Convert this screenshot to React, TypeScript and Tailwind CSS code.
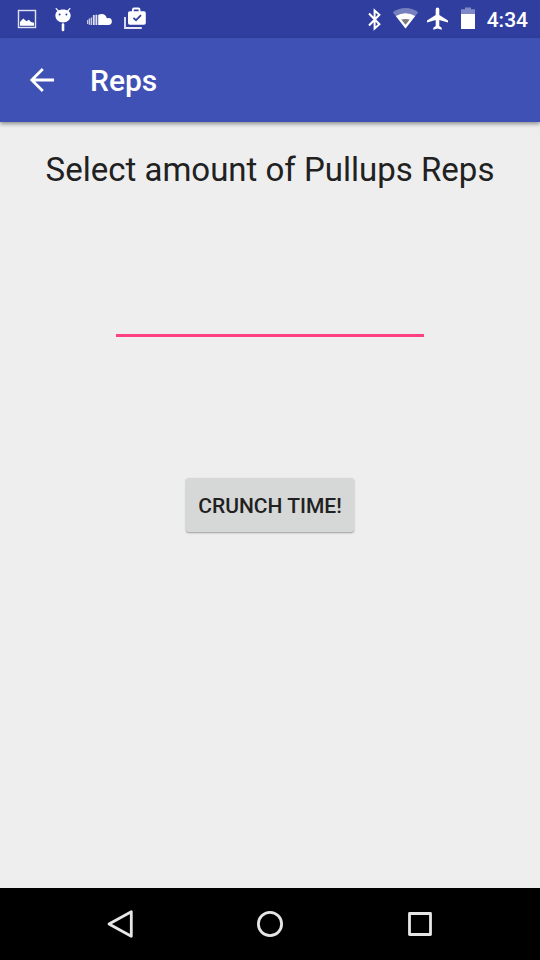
import React, { useState } from 'react';

function NotificationIcons() {
  return (
    <div className="flex pl-[9px] text-white" aria-hidden="true">
      <svg className="h-[38px] w-9" viewBox="0 0 36 38">
        <rect x="9.5" y="10.5" width="17" height="17" fill="none" stroke="#e0e2f0" strokeWidth="1.4" />
        <path d="M11 25.8V22l3.2-3.6 3.3 2.8 2.3-1.4 2.2 2.2 3 .8v3z" fill="#fff" />
      </svg>
      <svg className="h-[38px] w-9" viewBox="0 0 36 38">
        <path
          d="M10.4 15.6C10.4 11.6 13.6 9.6 18 9.6S25.6 11.6 25.6 15.6 22.4 22.6 18 22.6 10.4 19.6 10.4 15.6z"
          fill="currentColor"
        />
        <path d="M13.6 11.4 11.2 8.6M22.4 11.4l2.4-2.8" stroke="currentColor" strokeWidth="1.3" strokeLinecap="round" />
        <path d="M18 24.5v5.5" stroke="currentColor" strokeWidth="2.6" strokeLinecap="round" />
        <circle cx="14.6" cy="14.4" r="1" fill="#303f9f" />
        <circle cx="21.4" cy="14.4" r="1" fill="#303f9f" />
      </svg>
      <svg className="h-[38px] w-9" viewBox="0 0 36 38">
        <path
          d="M17.2 15C18.4 14.2 19.4 13.9 20.6 13.9c2.9 0 4.9 1.9 5.3 4.5.5-.2 1-.3 1.5-.3a3.4 3.4 0 0 1 0 6.9H17.2z"
          fill="currentColor"
        />
        <path d="M15.4 14.8V25M12.8 15V25" stroke="#fff" strokeWidth="1.8" opacity="0.85" />
        <path d="M10.4 17.4V25M8.4 18.6V24.8" stroke="#fff" strokeWidth="1.4" opacity="0.75" />
        <path d="M6.6 20v4" stroke="#fff" strokeWidth="1.2" opacity="0.7" />
      </svg>
      <svg className="h-[38px] w-9" viewBox="0 0 36 38">
        <path d="M8 17V28h16.8" fill="none" stroke="#e6e8f4" strokeWidth="1.8" />
        <path
          fillRule="evenodd"
          d="M12.8 11.2H15V9.6Q15 7.6 17 7.6h4.4q2 0 2 2v1.6H27q1.8 0 1.8 1.8v10q0 1.8-1.8 1.8H12.8q-1.8 0-1.8-1.8v-10q0-1.8 1.8-1.8zM16.8 11.2h4.8V9.4h-4.8z"
          fill="currentColor"
        />
        <path d="m16.4 17.8 2.6 2.4 5-5" fill="none" stroke="#303f9f" strokeWidth="1.7" />
      </svg>
    </div>
  );
}

function SystemIcons() {
  return (
    <div className="flex text-white" aria-hidden="true">
      <svg className="h-[38px] w-8" viewBox="0 0 32 38">
        <path
          d="M12 13.5 22.4 24.3 17.6 28.6V10.4L22.4 14.7 12 25.5"
          fill="none"
          stroke="currentColor"
          strokeWidth="2"
        />
      </svg>
      <svg className="h-[38px] w-8" viewBox="0 0 32 38">
        <path d="M3.8 12.2Q16.5 3.8 29.2 12.2L16.5 28.4z" fill="#7680be" />
        <path d="M6.8 16Q16.5 10.4 26.2 16L16.5 28.6z" fill="currentColor" />
        <path d="M12.2 19.4Q16.5 18.6 20.8 19.4L16.5 24.8z" fill="#7a7a7a" />
      </svg>
      <svg className="h-[38px] w-8" viewBox="0 0 32 38">
        <path
          d="M27 22.6v-2.2l-8.7-5.3V9.2a1.8 1.8 0 0 0-3.6 0v5.9L6 20.4v2.2l8.7-2.6v6l-2.4 1.8v2l4.2-1.2 4.2 1.2v-2L18.3 26v-6z"
          fill="currentColor"
        />
      </svg>
      <svg className="h-[38px] w-8" viewBox="0 0 32 38">
        <path d="M8 14V9.2h4V7.4h6v1.8h4V14z" fill="#8089c6" />
        <path d="M8 14h14v15H8z" fill="currentColor" />
      </svg>
    </div>
  );
}

export default function App() {
  const [reps, setReps] = useState('');
  return (
    <div className="flex min-h-screen flex-col bg-[#eeeeee] font-['Roboto',sans-serif] text-[#212121]">
      <div className="flex h-[38px] items-center justify-between bg-[#303f9f] pr-3">
        <NotificationIcons />
        <div className="flex items-center gap-[2px]">
          <SystemIcons />
          <time className="pt-[2px] text-[21px] leading-6 font-medium text-white">4:34</time>
        </div>
      </div>
      <header className="flex h-[84px] items-center gap-6 bg-[#3f51b5] px-6 text-white shadow-[0_2px_4px_rgba(0,0,0,0.4)]">
        <button type="button" aria-label="Back" className="flex size-9 items-center justify-center">
          <svg className="size-9" viewBox="0 0 36 36" fill="none" stroke="currentColor" strokeWidth="2.8">
            <path d="M30 18H8M18.8 7 7.8 18l11 11" />
          </svg>
        </button>
        <h1 className="pt-[2px] pl-[6px] text-[30px] leading-9 font-medium">Reps</h1>
      </header>
      <main className="flex flex-1 flex-col items-center px-6 pt-7">
        <label htmlFor="reps" className="text-center text-[33px] leading-10">
          Select amount of Pullups Reps
        </label>
        <input
          id="reps"
          type="text"
          inputMode="numeric"
          value={reps}
          onChange={(e) => setReps(e.target.value)}
          className="mt-[91px] h-14 w-[308px] border-b-[3px] border-[#ff4081] bg-transparent text-center text-[27px] outline-none"
        />
        <button
          type="button"
          className="mt-[141px] h-[54px] rounded-[3px] bg-[#d6d7d7] px-3 pt-[2px] text-[21px] leading-6 font-medium uppercase shadow-[0_1px_2px_rgba(0,0,0,0.35)]"
        >
          Crunch time!
        </button>
      </main>
      <nav className="flex h-[72px] items-center justify-center gap-[114px] bg-black text-[#e6e6e6]">
        <button type="button" aria-label="Back">
          <svg className="size-9" viewBox="0 0 36 36" fill="none" stroke="currentColor" strokeWidth="2.8" strokeLinejoin="round">
            <path d="M29.3 5.7v24.6L7 18z" />
          </svg>
        </button>
        <button type="button" aria-label="Home">
          <svg className="size-9" viewBox="0 0 36 36" fill="none" stroke="currentColor" strokeWidth="2.8">
            <circle cx="18" cy="18" r="11.6" />
          </svg>
        </button>
        <button type="button" aria-label="Recent apps">
          <svg className="size-9" viewBox="0 0 36 36" fill="none" stroke="currentColor" strokeWidth="2.8" strokeLinejoin="round">
            <path d="M7.5 7.5h21v21h-21z" />
          </svg>
        </button>
      </nav>
    </div>
  );
}
